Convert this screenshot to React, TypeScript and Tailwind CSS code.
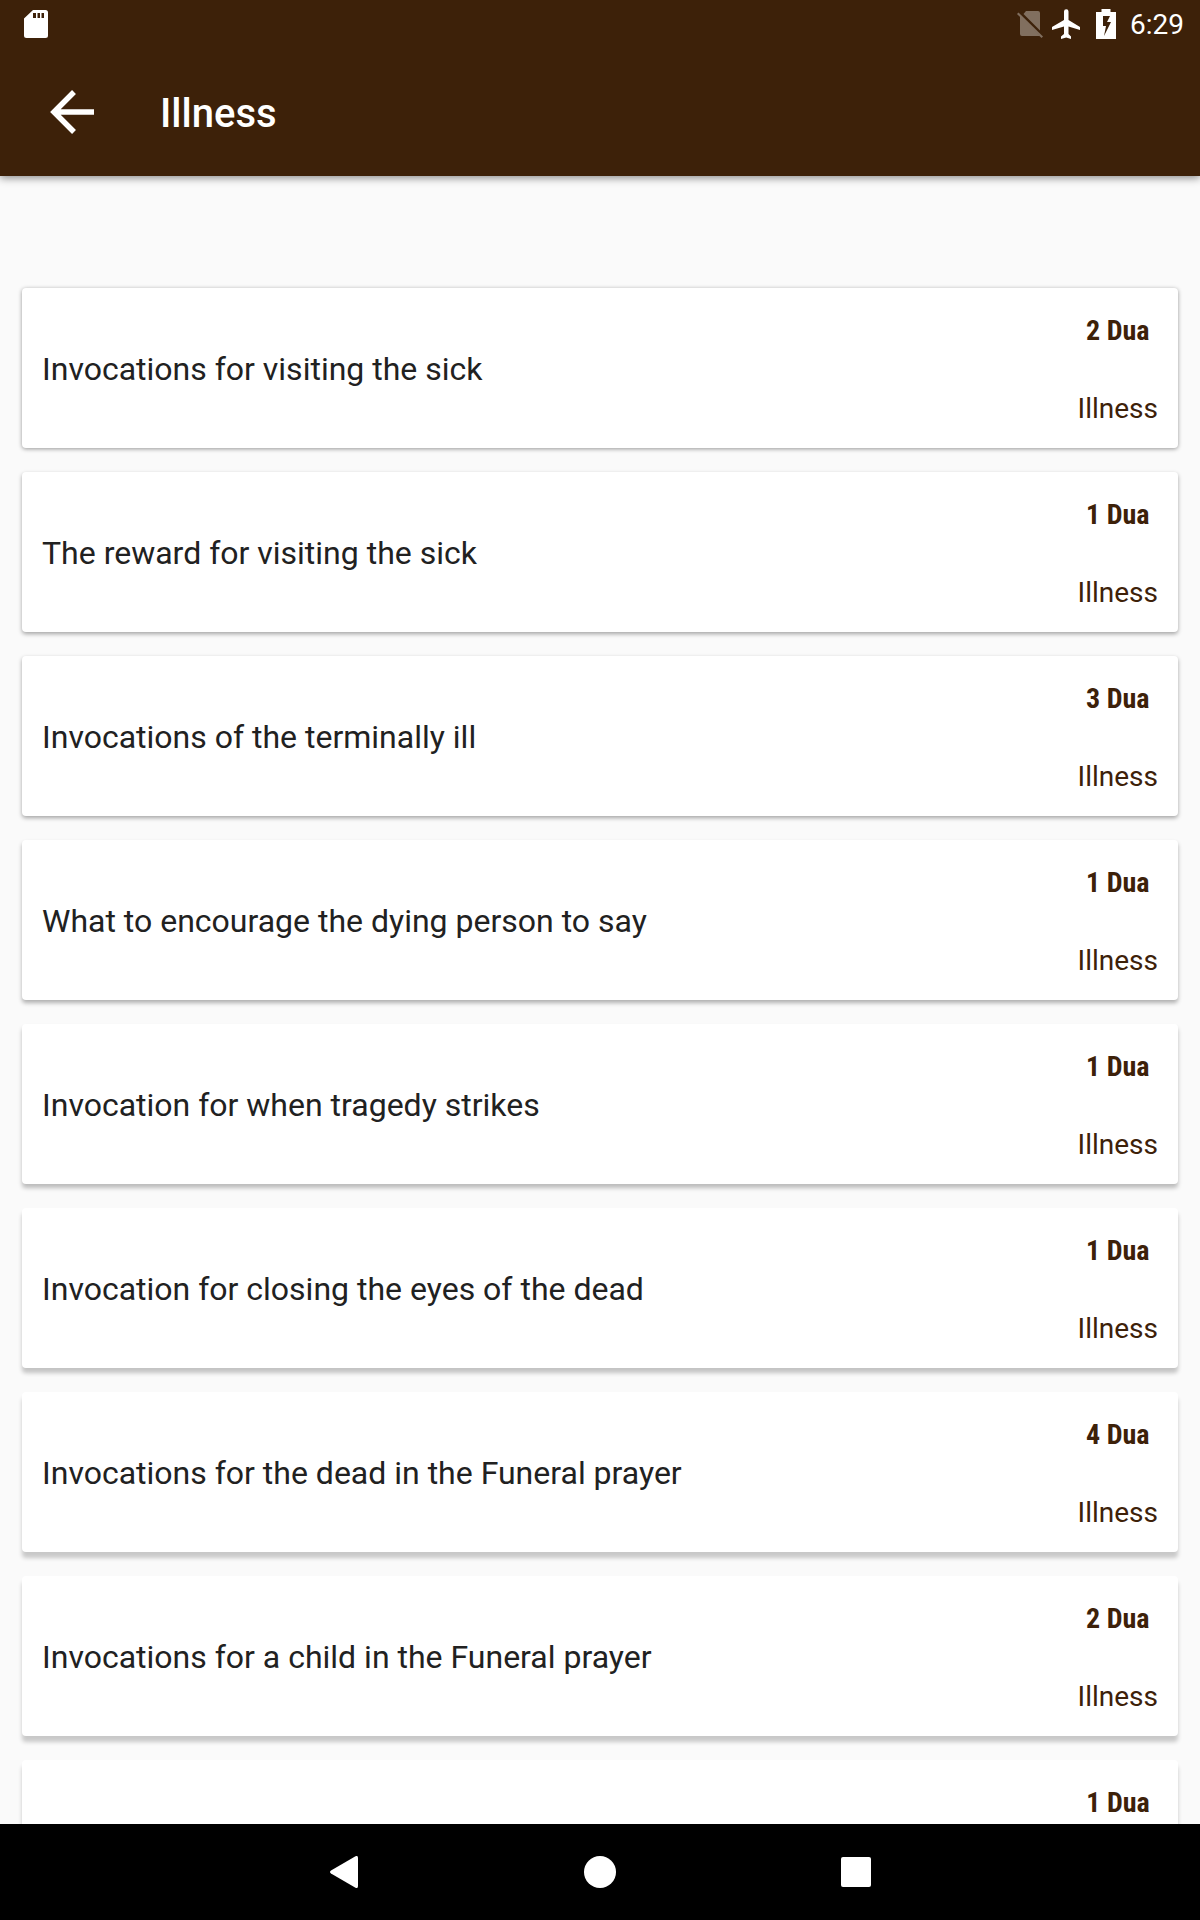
import React from 'react';

interface Chapter {
  title?: string;
  count: number;
  category?: string;
  // the cast shadow gets deeper the lower a card sits on the screen
  shadow: string;
}

const chapters: Chapter[] = [
  { title: 'Invocations for visiting the sick', count: 2, category: 'Illness', shadow: 'shadow-[0_1px_4px_#00000066]' },
  { title: 'The reward for visiting the sick', count: 1, category: 'Illness', shadow: 'shadow-[0_2px_4px_#00000059]' },
  { title: 'Invocations of the terminally ill', count: 3, category: 'Illness', shadow: 'shadow-[0_2px_4px_#00000059]' },
  { title: 'What to encourage the dying person to say', count: 1, category: 'Illness', shadow: 'shadow-[0_3px_4px_#0000004d]' },
  { title: 'Invocation for when tragedy strikes', count: 1, category: 'Illness', shadow: 'shadow-[0_4px_4px_#00000040]' },
  { title: 'Invocation for closing the eyes of the dead', count: 1, category: 'Illness', shadow: 'shadow-[0_5px_4px_#00000038]' },
  { title: 'Invocations for the dead in the Funeral prayer', count: 4, category: 'Illness', shadow: 'shadow-[0_6px_4px_#00000033]' },
  { title: 'Invocations for a child in the Funeral prayer', count: 2, category: 'Illness', shadow: 'shadow-[0_6px_4px_#00000033]' },
  { count: 1, shadow: 'shadow-[0_6px_4px_#00000033]' },
];

const StatusBar: React.FC = () => (
  <div className="flex h-12 items-center justify-between pl-6 pr-4 text-white">
    <svg width="24" height="28" viewBox="0 0 24 28" fill="currentColor" aria-hidden="true">
      <path
        fillRule="evenodd"
        d="M9 0h12.500A2.500 2.500 0 0 1 24 2.500v23A2.500 2.500 0 0 1 21.500 28h-19A2.500 2.500 0 0 1 0 25.500V8.500zM9 3v5h3V3zm4.500 0v5h2.500V3zm4 0v5h2.500V3z"
      />
    </svg>
    <div className="flex items-center">
      <svg width="28" height="28" viewBox="0 0 28 28" fill="currentColor" className="opacity-35" aria-hidden="true">
        <path d="M10 1h12a2 2 0 0 1 2 2v17.500L7.500 4zM4 6l20 20H6a2 2 0 0 1-2-2z" />
        <path d="M2.500 2.500 27 26.500l-1.500 1.500L1 4z" />
      </svg>
      <svg width="28" height="30" viewBox="0 0 28 30" fill="currentColor" className="ml-2" aria-hidden="true">
        <path d="M28 21v-3L16.500 11V2.500a2.250 2.250 0 0 0-4.500 0V11L0 18v3l12-3.500V25l-3 2.500V30l5.250-1.500L19 30v-2.500L16.500 25v-7.500z" />
      </svg>
      <svg width="20" height="30" viewBox="0 0 20 30" fill="currentColor" className="ml-4" aria-hidden="true">
        <path fillRule="evenodd" d="M5.500 0h9v3H20v27H0V3h5.500zM7 7v10h3l-2 10 7-14h-4l3-6z" />
      </svg>
      <span className="ml-3.5 pt-0.5 text-[28px] leading-8">6:29</span>
    </div>
  </div>
);

const ChapterCard: React.FC<{ chapter: Chapter }> = ({ chapter }) => (
  <li>
    <button
      className={`flex h-40 w-full items-center justify-between rounded bg-white px-5 text-left ${chapter.shadow}`}
    >
      <span className="pt-0.5 text-[32px] leading-10 text-[#212121]">{chapter.title}</span>
      <span className="flex min-w-20 shrink-0 flex-col items-center gap-11 self-start pt-[26px] text-[28px] leading-[34px] text-[#3d2109]">
        <span className="font-['Roboto_Condensed',Roboto,sans-serif] font-bold">{chapter.count} Dua</span>
        {chapter.category && <span>{chapter.category}</span>}
      </span>
    </button>
  </li>
);

const App: React.FC = () => {
  return (
    <div className="flex h-screen flex-col overflow-hidden bg-[#fafafa] font-[Roboto,sans-serif]">
      <header className="z-10 shrink-0 bg-[#3d2109] shadow-[0_2px_8px_#00000073]">
        <StatusBar />
        <div className="flex h-32 items-center pl-12 text-white">
          <button aria-label="Back">
            <svg width="48" height="48" viewBox="0 0 48 48" fill="none" stroke="currentColor" strokeWidth="5.500">
              <path d="M26 4 6 24l20 20M5 24h41" />
            </svg>
          </button>
          <h1 className="ml-16 pt-1 text-[40px] font-medium leading-[48px]">Illness</h1>
        </div>
      </header>

      <main className="min-h-0 flex-1 overflow-hidden px-[22px] pt-28">
        <ul className="flex flex-col gap-6">
          {chapters.map((chapter, i) => (
            <ChapterCard key={i} chapter={chapter} />
          ))}
        </ul>
      </main>

      {/* System navigation */}
      <nav className="z-10 flex h-24 shrink-0 items-center justify-center gap-[200px] bg-black text-white">
        <button aria-label="Go back" className="flex w-14 justify-center">
          <svg width="28" height="32" viewBox="0 0 28 32" fill="currentColor">
            <path d="M25.500 0.300Q28 -0.800 28 2v28q0 2.800-2.500 1.700L1 17.500Q-1 16 1 14.500z" />
          </svg>
        </button>
        <button aria-label="Home" className="flex w-14 justify-center">
          <span className="size-8 rounded-full bg-white" />
        </button>
        <button aria-label="Recent apps" className="flex w-14 justify-center">
          <span className="size-[30px] rounded-xs bg-white" />
        </button>
      </nav>
    </div>
  );
};

export default App;
